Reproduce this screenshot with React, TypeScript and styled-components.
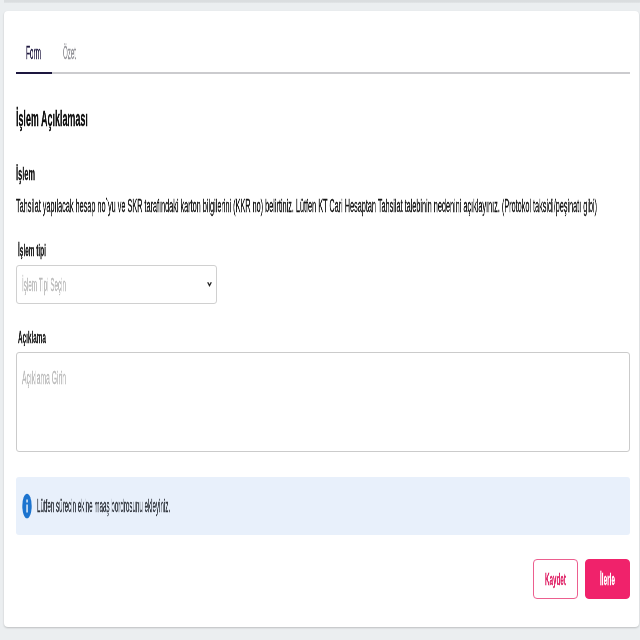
import React, { useLayoutEffect, useRef, useState } from 'react';
import styled, { createGlobalStyle } from 'styled-components';

const GlobalStyle = createGlobalStyle`
  * { box-sizing: border-box; }
  body { margin: 0; background: #ebeef0; overflow: hidden; }
  button { font: inherit; }
`;

const Page = styled.div`
  width: 640px;
  height: 640px;
  padding-left: 4px;
  background: #ebeef0;
  font-family: 'Liberation Sans', Arial, sans-serif;
  overflow: hidden;
`;

const PreviousCardEdge = styled.div`
  height: 3px;
  margin-bottom: 8px;
  background: linear-gradient(#dadddf 60%, #e3e6e8);
`;

const Card = styled.main`
  width: 635px;
  height: 616px;
  padding: 31px 9px 0 12px;
  background: #fff;
  border-radius: 4px;
  box-shadow: 0 1px 2px rgba(0, 0, 0, 0.2);
`;

const TextBox = styled.span<{ $width: number; $size: number; $color: string; $bold?: boolean }>`
  display: block;
  flex: none;
  width: ${p => p.$width}px;
  height: 20px;
  line-height: 20px;
  font-size: ${p => p.$size}px;
  font-weight: ${p => (p.$bold ? 700 : 400)};
  color: ${p => p.$color};
  white-space: nowrap;
`;

const Glyphs = styled.span`
  display: inline-block;
  line-height: 20px;
  vertical-align: top;
  transform-origin: 0 50%;
  will-change: transform;
  -webkit-text-stroke: 0.35px currentColor;
`;

type CondensedProps = { width: number; size: number; color: string; bold?: boolean; children: string };

/* Narrows a line of text to the given width while keeping its height. */
function Condensed({ width, size, color, bold, children }: CondensedProps) {
  const ref = useRef<HTMLSpanElement>(null);
  const [scale, setScale] = useState(1);
  useLayoutEffect(() => {
    if (ref.current) setScale(width / ref.current.offsetWidth);
  }, [width, size, children]);
  return (
    <TextBox $width={width} $size={size} $color={color} $bold={bold}>
      <Glyphs ref={ref} style={{ transform: `scaleX(${scale})` }}>{children}</Glyphs>
    </TextBox>
  );
}

const Tabs = styled.nav`
  display: flex;
  height: 32px;
  box-shadow: inset 0 -2px 0 #cbcbce;
`;

const Tab = styled.div<{ $active?: boolean }>`
  display: flex;
  justify-content: center;
  width: 36px;
  height: 32px;
  padding: 1px 1px 0 0;
  border-bottom: ${p => (p.$active ? '2px solid #1d173f' : '0')};
`;

const Title = styled.h1`
  margin: 35px 0 0;
`;

const Section = styled.section`
  margin-top: 35px;
`;

const Description = styled.div`
  margin-top: 12px;
`;

const Field = styled.div<{ $gap: number }>`
  display: flex;
  flex-direction: column;
  gap: 4px;
  margin-top: ${p => p.$gap}px;
`;

const Label = styled.label`
  padding-left: 2px;
`;

const Select = styled.div`
  display: flex;
  align-items: center;
  justify-content: space-between;
  width: 201px;
  height: 39px;
  padding: 0 4px 0 5px;
  border: 1px solid #d0d0d0;
  border-radius: 3px;
`;

const TextArea = styled.div`
  height: 100px;
  padding: 15px 5px;
  border: 1px solid #cbcbcb;
  border-radius: 3px;
`;

const Notice = styled.div`
  display: flex;
  align-items: center;
  gap: 5px;
  height: 58px;
  margin-top: 25px;
  padding: 0 6px;
  background: #e8f0fb;
  border-radius: 3px;
`;

const Actions = styled.footer`
  display: flex;
  justify-content: flex-end;
  gap: 7px;
  margin-top: 24px;
`;

const Button = styled.button<{ $primary?: boolean }>`
  display: flex;
  align-items: center;
  justify-content: center;
  width: 45px;
  height: 40px;
  padding: 1px 0 0;
  border: 1px solid ${p => (p.$primary ? '#f0226b' : '#ec5f8f')};
  border-radius: 4px;
  background: ${p => (p.$primary ? '#f0226b' : '#fff')};
`;

export default function App() {
  return (
    <>
      <GlobalStyle />
      <Page>
        <PreviousCardEdge />
        <Card>
          <Tabs>
            <Tab $active><Condensed width={15} size={17.5} color="#1d173f">Form</Condensed></Tab>
            <Tab><Condensed width={13} size={17.5} color="#96969b">Özet</Condensed></Tab>
          </Tabs>
          <Title><Condensed width={72} size={22} color="#111" bold>İşlem Açıklaması</Condensed></Title>
          <Section>
            <Condensed width={19} size={18} color="#171717" bold>İşlem</Condensed>
            <Description>
              <Condensed width={581} size={18} color="#171717">
                Tahsilat yapılacak hesap no`yu ve SKR tarafındaki karton bilgilerini (KKR no) belirtiniz. Lütfen KT Cari Hesaptan Tahsilat talebinin nedenini açıklayınız. (Protokol taksidi/peşinatı gibi)
              </Condensed>
            </Description>
          </Section>
          <Field $gap={25}>
            <Label><Condensed width={28} size={17} color="#222" bold>İşlem tipi</Condensed></Label>
            <Select>
              <Condensed width={44} size={18} color="#bcbcbc">İşlem Tipi Seçin</Condensed>
              <svg width="5" height="8" viewBox="0 0 5 8" fill="none">
                <path d="M0.7 1.2 2.5 4.6 4.3 1.2" stroke="#222" strokeWidth="1.3" />
              </svg>
            </Select>
          </Field>
          <Field $gap={24}>
            <Label><Condensed width={28} size={17} color="#222" bold>Açıklama</Condensed></Label>
            <TextArea><Condensed width={44} size={18} color="#bcbcbc">Açıklama Girin</Condensed></TextArea>
          </Field>
          <Notice>
            <svg width="10" height="26" viewBox="0 0 10 26">
              <ellipse cx="5" cy="13" rx="4.7" ry="12.3" fill="#1c74cf" />
              <path d="M4.4 6.5h1.3v3H4.4zM4.4 11.5h1.3v8H4.4z" fill="#fff" />
            </svg>
            <Condensed width={133} size={18} color="#333840">Lütfen sürecin ekine maaş bordrosunu ekleyiniz.</Condensed>
          </Notice>
          <Actions>
            <Button><Condensed width={21} size={17} color="#e0286a" bold>Kaydet</Condensed></Button>
            <Button $primary><Condensed width={15} size={17} color="#fff" bold>İlerle</Condensed></Button>
          </Actions>
        </Card>
      </Page>
    </>
  );
}
